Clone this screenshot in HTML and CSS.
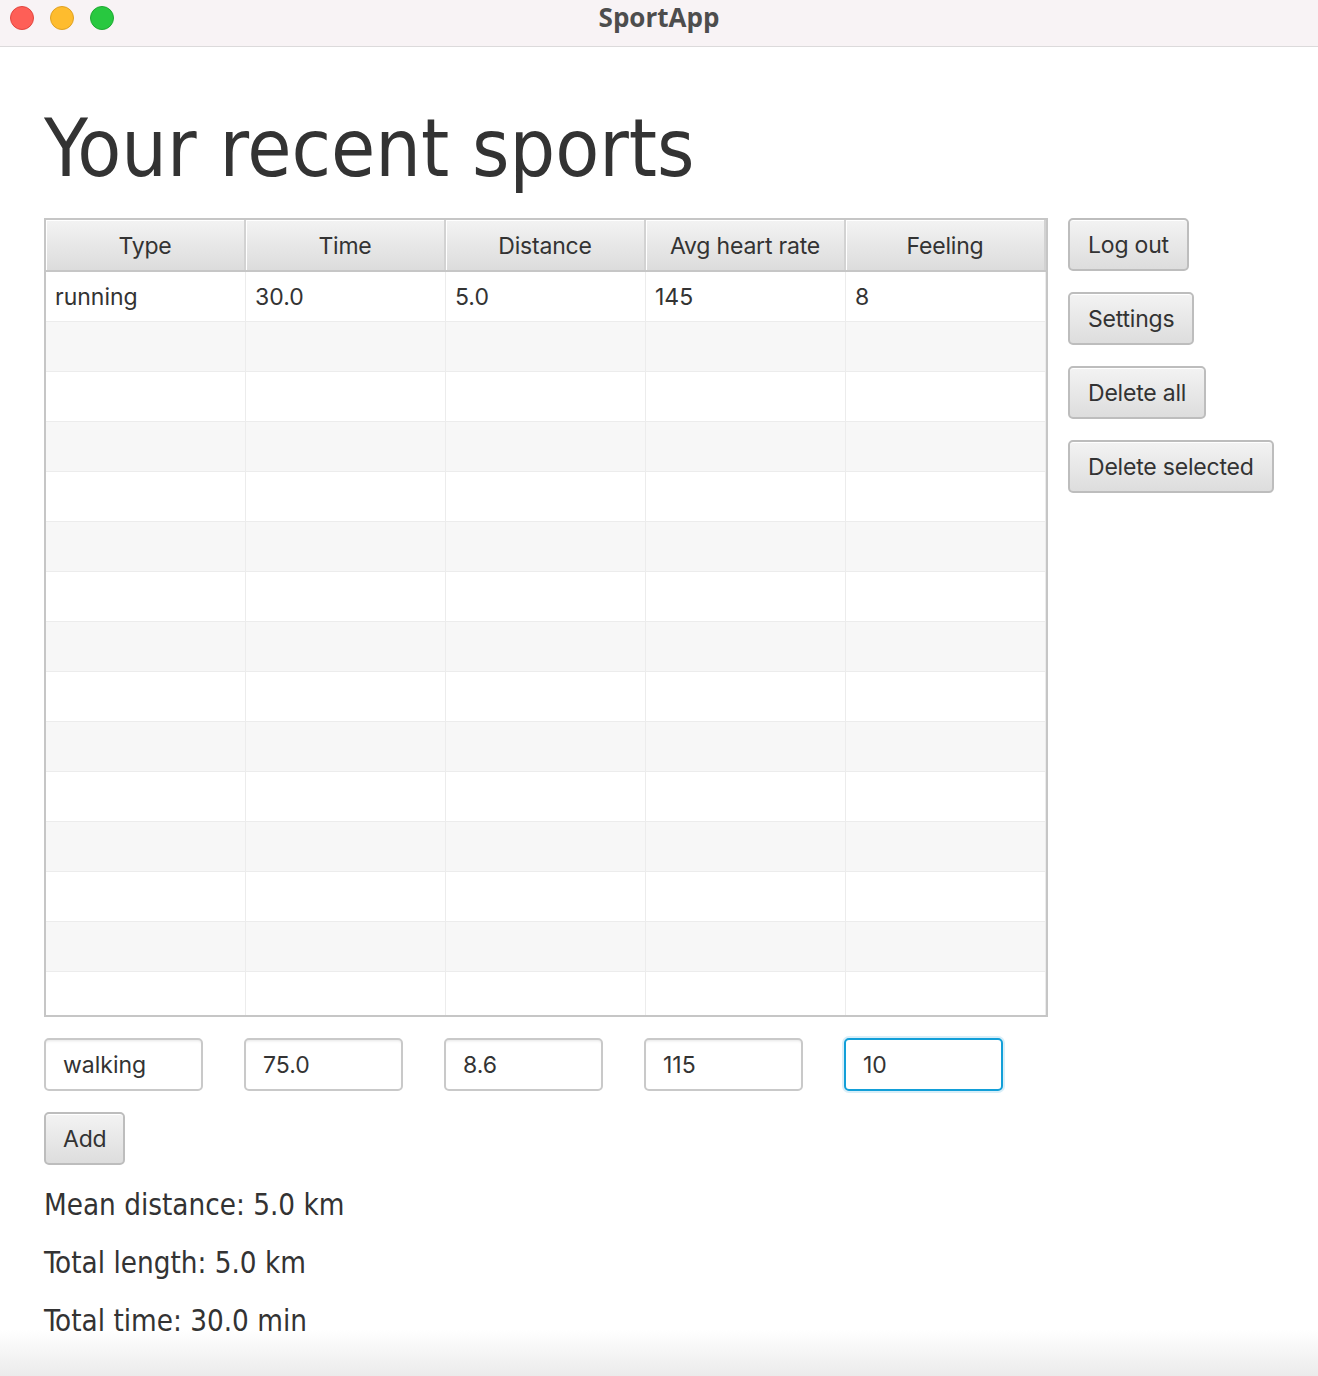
FILE: index.html
```html
<!DOCTYPE html>
<html>
<head>
<meta charset="utf-8">
<title>SportApp</title>
<link rel="stylesheet" href="styles.css">
</head>
<body>
<div class="titlebar">
  <div class="lights">
    <span class="light red"></span>
    <span class="light yellow"></span>
    <span class="light green"></span>
  </div>
  <div class="app-title">SportApp</div>
</div>
<main class="content">
  <h1 class="heading">Your recent sports</h1>
  <div class="main-row">
    <div class="table">
      <div class="thead">
        <div class="th">Type</div>
        <div class="th">Time</div>
        <div class="th">Distance</div>
        <div class="th">Avg heart rate</div>
        <div class="th">Feeling</div>
      </div>
      <div class="tbody">
        <div class="tr"><div class="td">running</div><div class="td">30.0</div><div class="td">5.0</div><div class="td">145</div><div class="td">8</div></div>
        <div class="tr"><div class="td"></div><div class="td"></div><div class="td"></div><div class="td"></div><div class="td"></div></div>
        <div class="tr"><div class="td"></div><div class="td"></div><div class="td"></div><div class="td"></div><div class="td"></div></div>
        <div class="tr"><div class="td"></div><div class="td"></div><div class="td"></div><div class="td"></div><div class="td"></div></div>
        <div class="tr"><div class="td"></div><div class="td"></div><div class="td"></div><div class="td"></div><div class="td"></div></div>
        <div class="tr"><div class="td"></div><div class="td"></div><div class="td"></div><div class="td"></div><div class="td"></div></div>
        <div class="tr"><div class="td"></div><div class="td"></div><div class="td"></div><div class="td"></div><div class="td"></div></div>
        <div class="tr"><div class="td"></div><div class="td"></div><div class="td"></div><div class="td"></div><div class="td"></div></div>
        <div class="tr"><div class="td"></div><div class="td"></div><div class="td"></div><div class="td"></div><div class="td"></div></div>
        <div class="tr"><div class="td"></div><div class="td"></div><div class="td"></div><div class="td"></div><div class="td"></div></div>
        <div class="tr"><div class="td"></div><div class="td"></div><div class="td"></div><div class="td"></div><div class="td"></div></div>
        <div class="tr"><div class="td"></div><div class="td"></div><div class="td"></div><div class="td"></div><div class="td"></div></div>
        <div class="tr"><div class="td"></div><div class="td"></div><div class="td"></div><div class="td"></div><div class="td"></div></div>
        <div class="tr"><div class="td"></div><div class="td"></div><div class="td"></div><div class="td"></div><div class="td"></div></div>
        <div class="tr"><div class="td"></div><div class="td"></div><div class="td"></div><div class="td"></div><div class="td"></div></div>
      </div>
    </div>
    <div class="side">
      <button class="btn">Log out</button>
      <button class="btn">Settings</button>
      <button class="btn">Delete all</button>
      <button class="btn">Delete selected</button>
    </div>
  </div>
  <div class="inputs">
    <input class="field" type="text" value="walking">
    <input class="field" type="text" value="75.0">
    <input class="field" type="text" value="8.6">
    <input class="field" type="text" value="115">
    <input class="field focused" type="text" value="10">
  </div>
  <button class="btn add">Add</button>
  <div class="stats">
    <p class="stat">Mean distance: 5.0 km</p>
    <p class="stat">Total length: 5.0 km</p>
    <p class="stat">Total time: 30.0 min</p>
  </div>
</main>
<div class="bottom-fade"></div>
</body>
</html>
```

FILE: styles.css
```css
* { box-sizing: border-box; }
html, body { margin: 0; padding: 0; }
body {
  width: 1318px;
  height: 1376px;
  overflow: hidden;
  background: #ffffff;
  font-family: Inter, "Open Sans", "Liberation Sans", sans-serif;
  color: #333333;
  position: relative;
}
.titlebar {
  height: 47px;
  background: #f8f3f5;
  border-bottom: 1px solid #dcdadb;
  display: flex;
  align-items: center;
  position: relative;
}
.lights {
  display: flex;
  gap: 16px;
  padding-left: 10px;
  margin-top: -10px;
}
.light {
  width: 24px;
  height: 24px;
  border-radius: 50%;
  display: block;
}
.red { background: #fe5f57; border: 1px solid #e2463f; }
.yellow { background: #febc2e; border: 1px solid #e0a123; }
.green { background: #28c840; border: 1px solid #1ea932; }
.app-title {
  position: absolute;
  left: 0;
  right: 0;
  top: 0;
  text-align: center;
  font-family: "Open Sans", Inter, sans-serif;
  font-weight: 700;
  font-size: 26px;
  line-height: 34px;
  color: #4d4d4d;
}
.content {
  padding-left: 44px;
}
.heading {
  margin: 0;
  padding-top: 52px;
  height: 171px;
  font-family: "DejaVu Sans Condensed", "DejaVu Sans", sans-serif;
  font-stretch: condensed;
  font-weight: 400;
  font-size: 80px;
  line-height: 100px;
  color: #333333;
  letter-spacing: 0;
}
.main-row {
  display: flex;
  gap: 20px;
  align-items: flex-start;
}
.table {
  width: 1004px;
  height: 799px;
  border: 2px solid #c6c6c6;
  overflow: hidden;
  background: #ffffff;
}
.thead {
  display: grid;
  grid-template-columns: repeat(5, 200px);
  height: 52px;
  border-bottom: 2px solid #c6c6c6;
}
.th {
  background: linear-gradient(#f3f3f3, #dcdcdc);
  border-right: 2px solid #d2d2d2;
  box-shadow: inset 1px 1px 0 #ffffff;
  text-align: center;
  font-size: 23px;
  padding-top: 2px;
  line-height: 48px;
  color: #333;
  letter-spacing: -0.2px;
}
.tr {
  display: grid;
  grid-template-columns: repeat(5, 200px);
  height: 50px;
  border-bottom: 1px solid #ececec;
}
.tr:nth-child(even) { background: #f7f7f7; }
.td {
  border-right: 1px solid #ececec;
  padding-left: 9px;
  font-size: 23px;
  line-height: 51px;
  color: #333;
}
.side {
  display: flex;
  flex-direction: column;
  align-items: flex-start;
  gap: 21px;
}
.btn {
  height: 53px;
  padding: 0 18px;
  border: 2px solid #bdbdbd;
  border-radius: 5px;
  background: linear-gradient(#f3f3f3, #dddddd);
  box-shadow: inset 0 1px 0 #ffffff;
  font-family: Inter, "Open Sans", sans-serif;
  font-size: 23px;
  color: #333333;
  letter-spacing: -0.2px;
}
.inputs {
  display: flex;
  gap: 41px;
  margin-top: 21px;
}
.field {
  width: 159px;
  height: 53px;
  border: 2px solid #c9c9c9;
  border-radius: 5px;
  background: #ffffff;
  box-shadow: inset 0 3px 3px -2px #e6e6e6;
  padding: 0 0 0 17px;
  font-family: Inter, "Open Sans", sans-serif;
  font-size: 23px;
  color: #333;
  outline: none;
}
.field.focused {
  border: 2px solid #129fd8;
  box-shadow: 0 0 0 2px #d8eef8;
}
.btn.add {
  margin-top: 21px;
  display: block;
  padding: 0 17px;
}
.stats {
  margin-top: 11px;
}
.stat {
  margin: 0;
  font-family: "DejaVu Sans Condensed", "DejaVu Sans", sans-serif;
  font-stretch: condensed;
  font-size: 29.3px;
  line-height: 58px;
  color: #333;
}
.bottom-fade {
  position: absolute;
  left: 0;
  right: 0;
  bottom: 0;
  height: 46px;
  background: linear-gradient(rgba(255,255,255,0), #ebebeb);
  pointer-events: none;
}
```
